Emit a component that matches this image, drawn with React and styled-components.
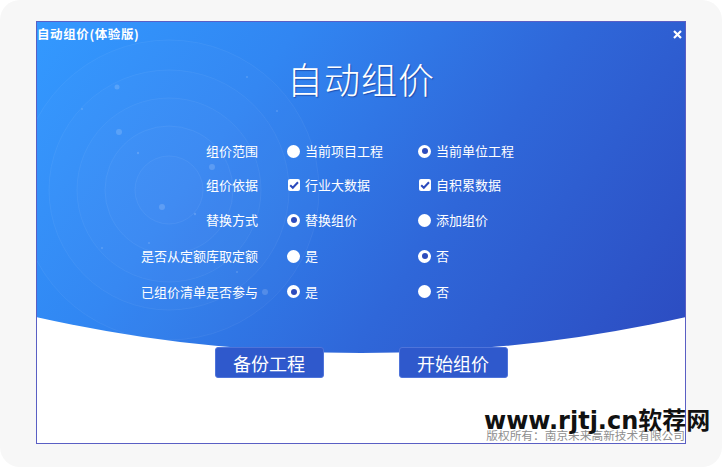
import React from 'react'
import styled, { createGlobalStyle } from 'styled-components'

const GlobalStyle = createGlobalStyle`
  html, body {
    margin: 0;
    padding: 0;
    background: #ffffff;
  }
  * {
    box-sizing: border-box;
  }
`

const CJK = `"Noto Sans CJK SC", "Noto Sans", sans-serif`

const Frame = styled.div`
  position: relative;
  width: 722px;
  height: 467px;
  background: #f7f7f7;
  border-radius: 20px;
  padding: 21px 0 0 36px;
  font-family: ${CJK};
`

const Window = styled.section`
  position: relative;
  width: 650px;
  height: 423px;
  border: 1px solid #5a5fc4;
  background: #ffffff;
  overflow: hidden;
  display: flex;
  flex-direction: column;
`

const Hero = styled.div`
  position: absolute;
  left: 0;
  top: 0;
  width: 100%;
  height: 331px;
  background: linear-gradient(125deg, #3399ff 0%, #3186f2 30%, #2f67d9 62%, #2c4bc0 100%);
  clip-path: circle(1485px at 50% calc(100% - 1485px));
`

const Rings = styled.svg`
  position: absolute;
  left: 0;
  top: 0;
`

const TitleBar = styled.header`
  position: relative;
  height: 24px;
  display: flex;
  align-items: center;
  justify-content: space-between;
  padding: 0 2px 0 0;
`

const WindowTitle = styled.span`
  color: #ffffff;
  font-size: 12.5px;
  font-weight: 700;
  letter-spacing: 0.6px;
  line-height: 14px;
`

const CloseButton = styled.span`
  display: flex;
  width: 12px;
  height: 12px;
  align-items: center;
  justify-content: center;
`

const BigTitle = styled.h1`
  position: relative;
  margin: 12px 0 0;
  text-align: center;
  color: #ffffff;
  font-size: 36px;
  font-weight: 300;
  line-height: 40px;
  letter-spacing: 1px;
  text-shadow: 1px 1px 1px rgba(10, 30, 110, 0.45);
`

const Form = styled.div`
  position: relative;
  margin-top: 36px;
  display: grid;
  grid-template-columns: 250px 131px 1fr;
  grid-template-rows: 34px 34px 36px 36px 35px;
  align-items: center;
`

const Label = styled.div`
  text-align: right;
  padding-right: 29px;
  color: #ffffff;
  font-size: 13px;
  line-height: 16px;
`

const Option = styled.div`
  display: flex;
  align-items: center;
  gap: 5px;
  color: #ffffff;
  font-size: 13px;
  line-height: 16px;
`

const Radio = styled.span`
  position: relative;
  width: 13px;
  height: 13px;
  border-radius: 50%;
  background: #ffffff;
  flex: none;

  &::after {
    content: '';
    display: ${({ checked }) => (checked ? 'block' : 'none')};
    position: absolute;
    left: 3.5px;
    top: 3.5px;
    width: 6px;
    height: 6px;
    border-radius: 50%;
    background: #2d4cbd;
  }
`

const Check = styled.span`
  display: flex;
  width: 12px;
  height: 12px;
  border-radius: 2px;
  background: #ffffff;
  flex: none;
  margin-left: 1px;
`

const Buttons = styled.div`
  position: relative;
  margin-top: 38px;
  display: flex;
  justify-content: center;
  gap: 75px;
`

const Button = styled.button`
  width: 109px;
  height: 31px;
  border: 1px solid #4f74da;
  border-radius: 3px;
  background: #2f59cc;
  color: #ffffff;
  font-family: ${CJK};
  font-size: 18px;
  line-height: 20px;
  padding: 0;
  cursor: pointer;
`

const Copyright = styled.footer`
  position: relative;
  margin-top: auto;
  padding: 0 0 1px;
  text-align: right;
  color: #8f8f8f;
  font-size: 11.7px;
  line-height: 14px;
`

const Watermark = styled.div`
  position: absolute;
  left: 484px;
  top: 403px;
  color: #111111;
  font-family: "DejaVu Sans", ${CJK};
  font-weight: 700;
  font-size: 24px;
  line-height: 36px;
  white-space: nowrap;
  pointer-events: none;
`

const rows = [
  { label: '组价范围', type: 'radio', options: [['当前项目工程', false], ['当前单位工程', true]] },
  { label: '组价依据', type: 'check', options: [['行业大数据', true], ['自积累数据', true]] },
  { label: '替换方式', type: 'radio', options: [['替换组价', true], ['添加组价', false]] },
  { label: '是否从定额库取定额', type: 'radio', options: [['是', false], ['否', true]] },
  { label: '已组价清单是否参与', type: 'radio', options: [['是', true], ['否', false]] },
]

const dots = [
  [80, 25, 2.5], [210, 15, 1], [240, 49, 1], [45, 47, 1], [82, 70, 3], [101, 91, 1.2],
  [175, 105, 3], [125, 145, 3], [158, 152, 1.2], [65, 186, 1], [112, 181, 1], [228, 230, 3],
  [200, 210, 1],
]

const CheckIcon = () => (
  <svg width="12" height="12" viewBox="0 0 12 12">
    <path d="M2.2 6.2 L4.8 8.8 L10 3.2" fill="none" stroke="#2b4abd" strokeWidth="2" />
  </svg>
)

const App = () => (
  <>
    <GlobalStyle />
    <Frame>
      <Window>
        <Hero>
          <Rings width="330" height="331" viewBox="0 0 330 331">
            {[150, 120, 92, 64, 34].map((r) => (
              <circle key={r} cx="132" cy="168" r={r} fill="rgba(255,255,255,0.015)" stroke="rgba(255,255,255,0.06)" strokeWidth="1" />
            ))}
            {dots.map(([x, y, r], i) => (
              <circle key={i} cx={x} cy={y + 40} r={r} fill="rgba(255,255,255,0.16)" />
            ))}
          </Rings>
        </Hero>

        <TitleBar>
          <WindowTitle>自动组价(体验版)</WindowTitle>
          <CloseButton>
            <svg width="9" height="9" viewBox="0 0 9 9">
              <path d="M1 1 L8 8 M8 1 L1 8" stroke="#ffffff" strokeWidth="2.2" />
            </svg>
          </CloseButton>
        </TitleBar>

        <BigTitle>自动组价</BigTitle>

        <Form>
          {rows.map((row) => (
            <React.Fragment key={row.label}>
              <Label>{row.label}</Label>
              {row.options.map(([text, on]) => (
                <Option key={text}>
                  {row.type === 'check' ? (
                    <Check>{on && <CheckIcon />}</Check>
                  ) : (
                    <Radio checked={on} />
                  )}
                  {text}
                </Option>
              ))}
            </React.Fragment>
          ))}
        </Form>

        <Buttons>
          <Button>备份工程</Button>
          <Button>开始组价</Button>
        </Buttons>

        <Copyright>版权所有：南京未来高新技术有限公司</Copyright>
      </Window>
      <Watermark>www.rjtj.cn软荐网</Watermark>
    </Frame>
  </>
)

export default App
